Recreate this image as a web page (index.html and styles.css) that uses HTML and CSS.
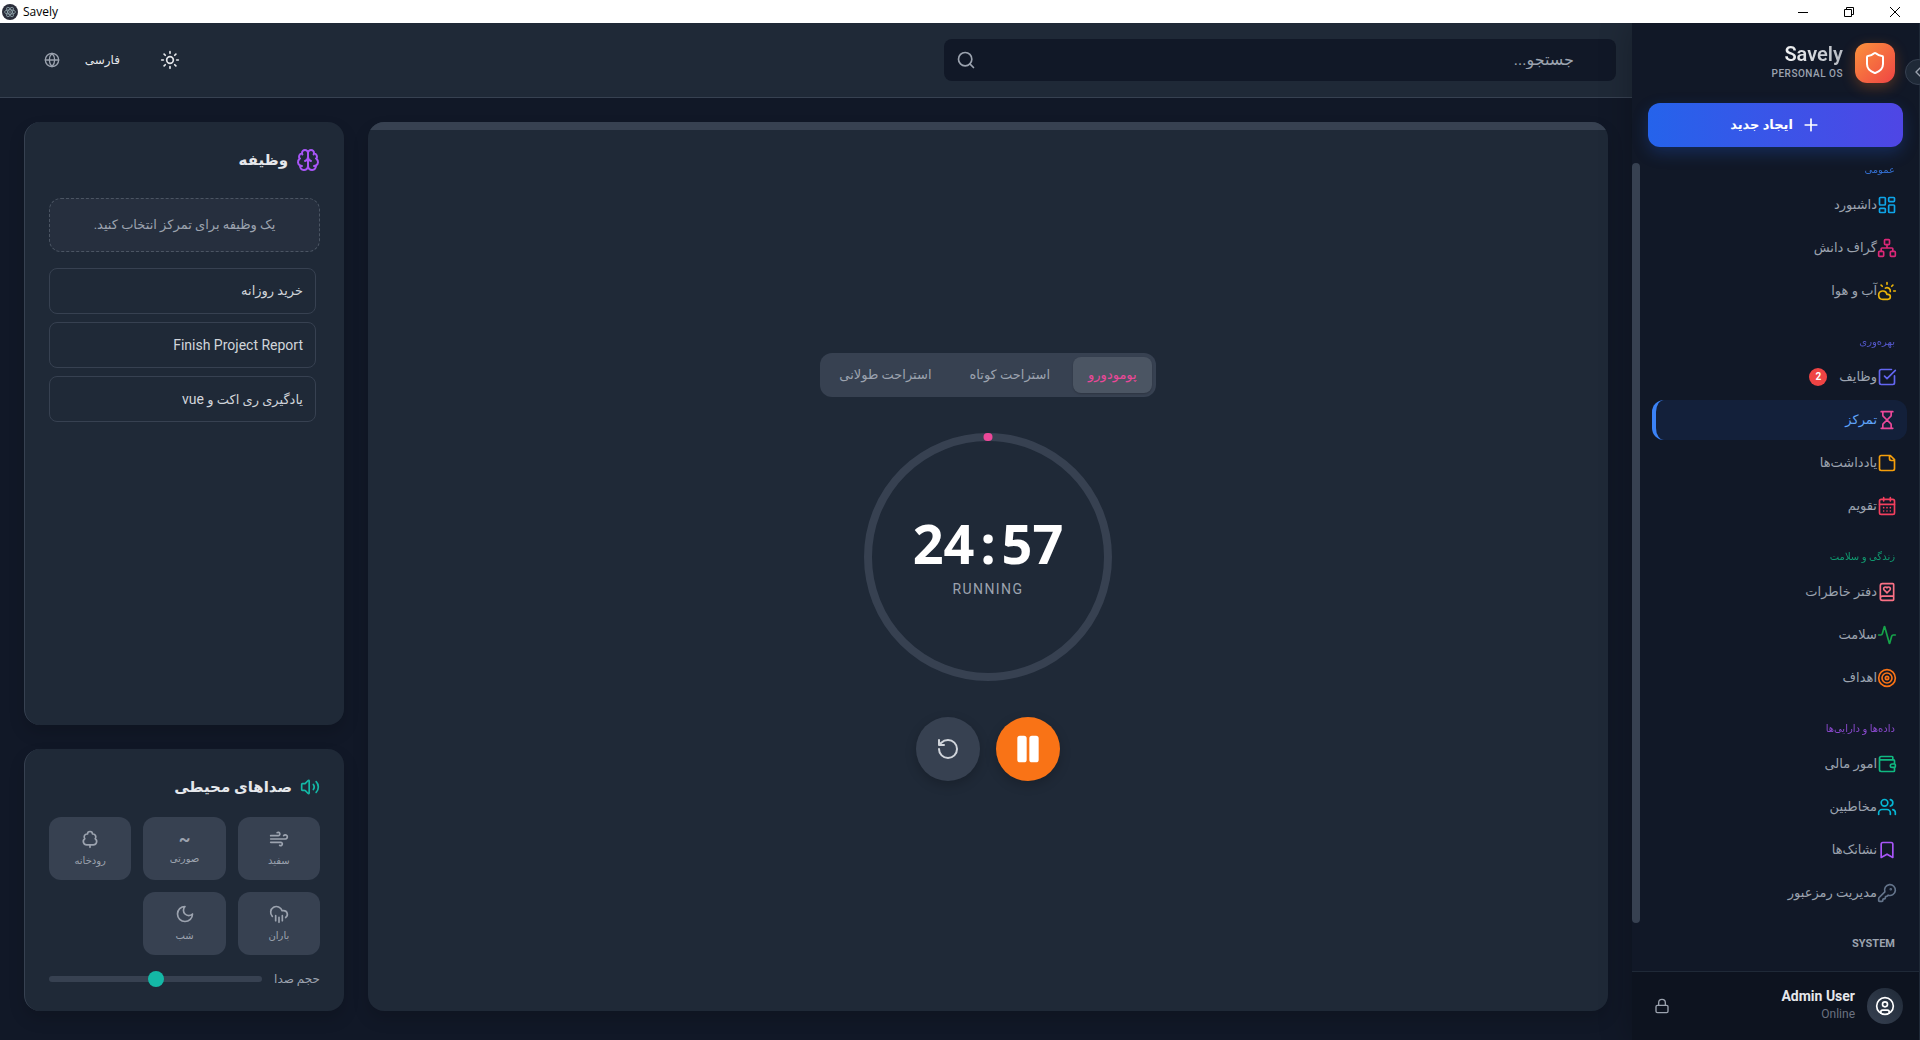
FILE: index.html
```html
<!DOCTYPE html>
<html lang="fa" dir="rtl">
<head>
    <meta charset="UTF-8">
    <meta name="viewport" content="width=device-width, initial-scale=1.0">
    <title>Savely</title>
    <link rel="stylesheet" href="styles.css">
</head>
<body>
    <div class="titlebar" dir="ltr">
        <svg class="app-icon" viewBox="0 0 16 16">
            <circle cx="8" cy="8" r="8" fill="#2b2e3b"/>
            <g fill="none" stroke="#9fb6bc" stroke-width="0.7">
                <ellipse cx="8" cy="8" rx="5.4" ry="2.1"/>
                <ellipse cx="8" cy="8" rx="5.4" ry="2.1" transform="rotate(60 8 8)"/>
                <ellipse cx="8" cy="8" rx="5.4" ry="2.1" transform="rotate(120 8 8)"/>
            </g>
            <circle cx="8" cy="8" r="0.8" fill="#9fb6bc"/>
        </svg>
        <span class="titlebar-name">Savely</span>
        <div class="window-buttons">
            <button type="button" aria-label="Minimize"><svg viewBox="0 0 10 10"><path d="M0 5.5h10"/></svg></button>
            <button type="button" aria-label="Restore"><svg viewBox="0 0 10 10"><path d="M.5 2.5h7v7h-7zM2.5 2.5v-2h7v7h-2"/></svg></button>
            <button type="button" aria-label="Close"><svg viewBox="0 0 10 10"><path d="M0 0l10 10M10 0L0 10"/></svg></button>
        </div>
    </div>

    <div class="app">
        <aside class="sidebar">
            <div class="brand">
                <div class="brand-logo">
                    <svg class="icon icon-lg" viewBox="0 0 24 24"><path d="M20 13c0 5-3.5 7.5-7.66 8.95a1 1 0 0 1-.67-.01C7.5 20.5 4 18 4 13V6a1 1 0 0 1 1-1c2 0 4.5-1.2 6.24-2.72a1.17 1.17 0 0 1 1.52 0C14.51 3.81 17 5 19 5a1 1 0 0 1 1 1z"/></svg>
                </div>
                <div class="brand-text">
                    <h1>Savely</h1>
                    <p>PERSONAL OS</p>
                </div>
            </div>
            <button type="button" class="collapse" aria-label="Toggle sidebar">
                <svg class="icon icon-sm" viewBox="0 0 24 24"><path d="m15 18-6-6 6-6"/></svg>
            </button>

            <button type="button" class="create">
                <svg class="icon" viewBox="0 0 24 24"><path d="M5 12h14M12 5v14"/></svg>
                ایجاد جدید
            </button>

            <div class="nav-wrap">
                <nav class="nav">
                    <section>
                        <h2 class="blue">عمومی</h2>
                        <a href="#"><svg class="icon sky" viewBox="0 0 24 24"><rect width="7" height="9" x="3" y="3" rx="1"/><rect width="7" height="5" x="14" y="3" rx="1"/><rect width="7" height="9" x="14" y="12" rx="1"/><rect width="7" height="5" x="3" y="16" rx="1"/></svg>داشبورد</a>
                        <a href="#"><svg class="icon pink-dark" viewBox="0 0 24 24"><rect x="16" y="16" width="6" height="6" rx="1"/><rect x="2" y="16" width="6" height="6" rx="1"/><rect x="9" y="2" width="6" height="6" rx="1"/><path d="M5 16v-3a1 1 0 0 1 1-1h12a1 1 0 0 1 1 1v3M12 12V8"/></svg>گراف دانش</a>
                        <a href="#"><svg class="icon yellow" viewBox="0 0 24 24"><path d="M12 2v2M4.93 4.93l1.41 1.41M20 12h2M19.07 4.93l-1.41 1.41M15.947 12.65a4 4 0 0 0-5.925-4.128M13 22H7a5 5 0 1 1 4.9-6H13a3 3 0 0 1 0 6Z"/></svg>آب و هوا</a>
                    </section>
                    <section>
                        <h2 class="indigo">بهره‌وری</h2>
                        <a href="#"><svg class="icon indigo" viewBox="0 0 24 24"><path d="M21 10.656V19a2 2 0 0 1-2 2H5a2 2 0 0 1-2-2V5a2 2 0 0 1 2-2h12.344M9 11l3 3L22 4"/></svg>وظایف<span class="badge">2</span></a>
                        <a href="#" class="active"><svg class="icon pink" viewBox="0 0 24 24"><path d="M5 22h14M5 2h14M17 22v-4.172a2 2 0 0 0-.586-1.414L12 12l-4.414 4.414A2 2 0 0 0 7 17.828V22M7 2v4.172a2 2 0 0 0 .586 1.414L12 12l4.414-4.414A2 2 0 0 0 17 6.172V2"/></svg>تمرکز</a>
                        <a href="#"><svg class="icon amber" viewBox="0 0 24 24"><path d="M16 3H5a2 2 0 0 0-2 2v14a2 2 0 0 0 2 2h14a2 2 0 0 0 2-2V8ZM15 3v4a2 2 0 0 0 2 2h4"/></svg>یادداشت‌ها</a>
                        <a href="#"><svg class="icon rose" viewBox="0 0 24 24"><path d="M8 2v4M16 2v4M3 10h18M8 14h.01M12 14h.01M16 14h.01M8 18h.01M12 18h.01M16 18h.01"/><rect width="18" height="18" x="3" y="4" rx="2"/></svg>تقویم</a>
                    </section>
                    <section>
                        <h2 class="green">زندگی و سلامت</h2>
                        <a href="#"><svg class="icon rose-light" viewBox="0 0 24 24"><path d="M16 8.2A2.22 2.22 0 0 0 13.8 6c-.8 0-1.4.3-1.8.9-.4-.6-1-.9-1.8-.9A2.22 2.22 0 0 0 8 8.2c0 .6.3 1.2.7 1.6A226.652 226.652 0 0 0 12 13a404 404 0 0 0 3.3-3.1 2.413 2.413 0 0 0 .7-1.7M4 19.5v-15A2.5 2.5 0 0 1 6.5 2H19a1 1 0 0 1 1 1v18a1 1 0 0 1-1 1H6.5a1 1 0 0 1 0-5H20"/></svg>دفتر خاطرات</a>
                        <a href="#"><svg class="icon lime" viewBox="0 0 24 24"><path d="M22 12h-2.48a2 2 0 0 0-1.93 1.46l-2.35 8.36a.25.25 0 0 1-.48 0L9.24 2.18a.25.25 0 0 0-.48 0l-2.35 8.36A2 2 0 0 1 4.49 12H2"/></svg>سلامت</a>
                        <a href="#"><svg class="icon orange" viewBox="0 0 24 24"><circle cx="12" cy="12" r="10"/><circle cx="12" cy="12" r="6"/><circle cx="12" cy="12" r="2"/></svg>اهداف</a>
                    </section>
                    <section>
                        <h2 class="purple">داده‌ها و دارایی‌ها</h2>
                        <a href="#"><svg class="icon green" viewBox="0 0 24 24"><path d="M19 7V4a1 1 0 0 0-1-1H5a2 2 0 0 0 0 4h15a1 1 0 0 1 1 1v4h-3a2 2 0 0 0 0 4h3a1 1 0 0 0 1-1v-2a1 1 0 0 0-1-1M3 5v14a2 2 0 0 0 2 2h15a1 1 0 0 0 1-1v-4"/></svg>امور مالی</a>
                        <a href="#"><svg class="icon cyan" viewBox="0 0 24 24"><path d="M16 21v-2a4 4 0 0 0-4-4H6a4 4 0 0 0-4 4v2M22 21v-2a4 4 0 0 0-3-3.87M16 3.13a4 4 0 0 1 0 7.75"/><circle cx="9" cy="7" r="4"/></svg>مخاطبین</a>
                        <a href="#"><svg class="icon purple" viewBox="0 0 24 24"><path d="m19 21-7-4-7 4V5a2 2 0 0 1 2-2h10a2 2 0 0 1 2 2v16z"/></svg>نشانک‌ها</a>
                        <a href="#"><svg class="icon slate" viewBox="0 0 24 24"><path d="M2.586 17.414A2 2 0 0 0 2 18.828V21a1 1 0 0 0 1 1h3a1 1 0 0 0 1-1v-1a1 1 0 0 1 1-1h1a1 1 0 0 0 1-1v-1a1 1 0 0 1 1-1h.172a2 2 0 0 0 1.414-.586l.814-.814a6.5 6.5 0 1 0-4-4z"/><circle cx="16.5" cy="7.5" r=".5" fill="currentColor"/></svg>مدیریت رمزعبور</a>
                    </section>
                    <section>
                        <h2 class="system">SYSTEM</h2>
                    </section>
                </nav>
                <div class="scroll"></div>
            </div>

            <div class="profile">
                <div class="avatar">
                    <svg class="icon" viewBox="0 0 24 24"><circle cx="12" cy="12" r="10"/><circle cx="12" cy="10" r="3"/><path d="M7 20.662V19a2 2 0 0 1 2-2h6a2 2 0 0 1 2 2v1.662"/></svg>
                </div>
                <div class="profile-text">
                    <strong>Admin User</strong>
                    <span>Online</span>
                </div>
                <button type="button" class="plain" aria-label="Lock">
                    <svg class="icon icon-sm" viewBox="0 0 24 24"><rect width="18" height="11" x="3" y="11" rx="2"/><path d="M7 11V7a5 5 0 0 1 10 0v4"/></svg>
                </button>
            </div>
        </aside>

        <div class="content">
            <header class="topbar">
                <label class="search">
                    <input type="text" placeholder="جستجو..." aria-label="جستجو">
                    <svg class="icon" viewBox="0 0 24 24"><circle cx="11" cy="11" r="8"/><path d="m21 21-4.34-4.34"/></svg>
                </label>
                <div class="topbar-tools">
                    <button type="button" class="plain theme" aria-label="Theme">
                        <svg class="icon" viewBox="0 0 24 24"><circle cx="12" cy="12" r="4"/><path d="M12 2v2M12 20v2M4.93 4.93l1.41 1.41M17.66 17.66l1.41 1.41M2 12h2M20 12h2M6.34 17.66l-1.41 1.41M19.07 4.93l-1.41 1.41"/></svg>
                    </button>
                    <label class="language">
                        <select aria-label="زبان">
                            <option>فارسی</option>
                        </select>
                        <svg class="icon icon-sm" viewBox="0 0 24 24"><circle cx="12" cy="12" r="10"/><path d="M12 2a14.5 14.5 0 0 0 0 20 14.5 14.5 0 0 0 0-20M2 12h20"/></svg>
                    </label>
                </div>
            </header>

            <main class="main">
                <section class="card focus">
                    <div class="progress"></div>
                    <div class="timer">
                        <div class="tabs">
                            <button type="button" class="selected">پومودورو</button>
                            <button type="button">استراحت کوتاه</button>
                            <button type="button">استراحت طولانی</button>
                        </div>
                        <div class="ring">
                            <svg viewBox="0 0 256 256">
                                <circle cx="128" cy="128" r="120" fill="none" stroke="#374151" stroke-width="8"/>
                                <path d="M127.5 8h1" stroke="#ec4899" stroke-width="8" stroke-linecap="round"/>
                            </svg>
                            <div class="time" dir="ltr">24<span>:</span>57</div>
                            <div class="state">RUNNING</div>
                        </div>
                        <div class="controls">
                            <button type="button" class="pause" aria-label="Pause">
                                <svg viewBox="0 0 24 24"><rect x="14" y="3" width="5" height="18" rx="1"/><rect x="5" y="3" width="5" height="18" rx="1"/></svg>
                            </button>
                            <button type="button" class="reset" aria-label="Reset">
                                <svg class="icon icon-lg" viewBox="0 0 24 24"><path d="M3 12a9 9 0 1 0 9-9 9.75 9.75 0 0 0-6.74 2.74L3 8M3 3v5h5"/></svg>
                            </button>
                        </div>
                    </div>
                </section>

                <div class="side">
                    <section class="card tasks">
                        <h3><svg class="icon icon-lg purple" viewBox="0 0 24 24"><path d="M12 5a3 3 0 1 0-5.997.125 4 4 0 0 0-2.526 5.77 4 4 0 0 0 .556 6.588A4 4 0 1 0 12 18ZM12 5a3 3 0 1 1 5.997.125 4 4 0 0 1 2.526 5.77 4 4 0 0 1-.556 6.588A4 4 0 1 1 12 18ZM15 13a4.5 4.5 0 0 1-3-4 4.5 4.5 0 0 1-3 4M17.599 6.5a3 3 0 0 0 .399-1.375M6.003 5.125A3 3 0 0 0 6.401 6.5M3.477 10.896a4 4 0 0 1 .585-.396M19.938 10.5a4 4 0 0 1 .585.396M6 18a4 4 0 0 1-1.967-.516M19.967 17.484A4 4 0 0 1 18 18"/></svg>وظیفه</h3>
                        <p class="empty">یک وظیفه برای تمرکز انتخاب کنید.</p>
                        <div class="task-list">
                            <button type="button">خرید روزانه</button>
                            <button type="button" lang="en">Finish Project Report</button>
                            <button type="button">یادگیری ری اکت و <span lang="en">vue</span></button>
                        </div>
                    </section>

                    <section class="card sounds">
                        <h3><svg class="icon teal" viewBox="0 0 24 24"><path d="M11 4.702a.705.705 0 0 0-1.203-.498L6.413 7.587A1.4 1.4 0 0 1 5.416 8H3a1 1 0 0 0-1 1v6a1 1 0 0 0 1 1h2.416a1.4 1.4 0 0 1 .997.413l3.383 3.384A.705.705 0 0 0 11 19.298zM16 9a5 5 0 0 1 0 6M19.364 18.364a9 9 0 0 0 0-12.728"/></svg>صداهای محیطی</h3>
                        <div class="sound-grid">
                            <button type="button"><svg class="icon" viewBox="0 0 24 24"><path d="M12.8 19.6A2 2 0 1 0 14 16H2M17.5 8a2.5 2.5 0 1 1 2 4H2M9.8 4.4A2 2 0 1 1 11 8H2"/></svg>سفید</button>
                            <button type="button"><b>~</b>صورتی</button>
                            <button type="button"><svg class="icon" viewBox="0 0 24 24"><path d="M8 19a4 4 0 0 1-2.24-7.32A3.5 3.5 0 0 1 9 6.03V6a3 3 0 1 1 6 0v.04a3.5 3.5 0 0 1 3.24 5.65A4 4 0 0 1 16 19ZM12 19v3"/></svg>رودخانه</button>
                            <button type="button"><svg class="icon" viewBox="0 0 24 24"><path d="M4 14.899A7 7 0 1 1 15.71 8h1.79a4.5 4.5 0 0 1 2.5 8.242M16 14v6M8 14v6M12 16v6"/></svg>باران</button>
                            <button type="button"><svg class="icon" viewBox="0 0 24 24"><path d="M12 3a6 6 0 0 0 9 9 9 9 0 1 1-9-9Z"/></svg>شب</button>
                        </div>
                        <div class="volume">
                            <label for="volume">حجم صدا</label>
                            <input type="range" id="volume" min="0" max="100" value="50">
                        </div>
                    </section>
                </div>
            </main>
        </div>
    </div>
</body>
</html>
```
FILE: styles.css
```css
* {
    box-sizing: border-box;
}

body {
    display: flex;
    flex-direction: column;
    height: 100vh;
    margin: 0;
    overflow: hidden;
    font-family: Roboto, "DejaVu Sans", sans-serif;
    font-size: 13px;
    line-height: 20px;
    color: #e5e7eb;
    background-color: #111827;
}

h1, h2, h3, p {
    margin: 0;
}

button, input, select {
    margin: 0;
    padding: 0;
    border: none;
    font: inherit;
    color: inherit;
    background: none;
}

button {
    cursor: pointer;
}

/* icons */
.icon {
    flex: none;
    width: 20px;
    height: 20px;
    fill: none;
    stroke: currentColor;
    stroke-width: 2;
    stroke-linecap: round;
    stroke-linejoin: round;
}

.icon-sm {
    width: 16px;
    height: 16px;
}

.icon-lg {
    width: 24px;
    height: 24px;
}

.blue { color: #3b82f6; }
.sky { color: #0ea5e9; }
.pink { color: #ec4899; }
.pink-dark { color: #db2777; }
.yellow { color: #eab308; }
.indigo { color: #6366f1; }
.amber { color: #f59e0b; }
.rose { color: #f43f5e; }
.rose-light { color: #fb7185; }
.green { color: #10b981; }
.lime { color: #16a34a; }
.orange { color: #f97316; }
.purple { color: #a855f7; }
.cyan { color: #06b6d4; }
.slate { color: #64748b; }
.teal { color: #14b8a6; }

/* window title bar */
.titlebar {
    flex: none;
    display: flex;
    align-items: center;
    height: 23px;
    padding: 0 2px;
    font-family: "Open Sans", sans-serif;
    font-size: 12px;
    color: #000;
    background-color: #fff;
}

.app-icon {
    width: 16px;
    height: 16px;
    margin-right: 5px;
}

.window-buttons {
    display: flex;
    margin-left: auto;
}

.window-buttons button {
    display: flex;
    justify-content: center;
    align-items: center;
    width: 46px;
    height: 20px;
}

.window-buttons svg {
    width: 10px;
    height: 10px;
    fill: none;
    stroke: #000;
    overflow: visible;
}

.app {
    flex: 1;
    display: flex;
    min-height: 0;
    overflow: hidden;
}

/* sidebar */
.sidebar {
    position: relative;
    z-index: 1;
    flex: none;
    display: flex;
    flex-direction: column;
    width: 288px;
    border-right: 1px solid #1f2937;
    background-color: #111827;
    box-shadow: 0 0 30px rgba(0, 0, 0, 0.25);
}

.brand {
    display: flex;
    align-items: center;
    gap: 12px;
    padding: 20px 24px;
}

.brand-logo {
    display: flex;
    justify-content: center;
    align-items: center;
    width: 40px;
    height: 40px;
    border-radius: 12px;
    color: #fff;
    background-image: linear-gradient(to bottom right, #fb923c, #ef4444);
    box-shadow: 0 4px 14px rgba(249, 115, 22, 0.3);
}

.brand-text {
    direction: ltr;
    text-align: right;
}

.brand h1 {
    font-size: 20px;
    line-height: 22px;
    font-weight: 600;
    color: transparent;
    background-image: linear-gradient(to right, #fff, #b6bac2);
    background-clip: text;
}

.brand p {
    font-size: 10px;
    line-height: 18px;
    font-weight: 500;
    letter-spacing: 0.5px;
    color: #9ca3af;
}

.collapse {
    position: absolute;
    top: 36px;
    right: -12px;
    display: flex;
    justify-content: center;
    align-items: center;
    width: 26px;
    height: 26px;
    border: 1px solid #374151;
    border-radius: 50%;
    color: #9ca3af;
    background-color: #1f2937;
}

.create {
    flex: none;
    display: flex;
    justify-content: center;
    align-items: center;
    gap: 8px;
    height: 44px;
    margin: 0 16px 16px;
    border-radius: 12px;
    font-weight: bold;
    color: #fff;
    background-image: linear-gradient(to right, #2563eb, #4f46e5);
    box-shadow: 0 6px 16px rgba(37, 99, 235, 0.25);
}

.nav-wrap {
    flex: 1;
    display: flex;
    min-height: 0;
    overflow: hidden;
}

.nav {
    flex: 1;
    padding: 0 12px;
}

.nav section {
    display: flex;
    flex-direction: column;
    gap: 3px;
    margin-bottom: 24px;
}

.nav h2 {
    margin-bottom: 5px;
    padding: 0 12px;
    font-size: 10px;
    line-height: 14px;
    font-weight: normal;
    opacity: 0.8;
}

.nav .system {
    font-size: 11px;
    font-weight: bold;
    color: #9ca3af;
    opacity: 1;
}

.nav a {
    display: flex;
    align-items: center;
    height: 40px;
    padding: 0 10px;
    border-left: 4px solid transparent;
    border-radius: 12px;
    color: #9ca3af;
    text-decoration: none;
}

.nav a.active {
    border-left-color: #3b82f6;
    color: #60a5fa;
    background-color: #13203a;
}

.badge {
    width: 18px;
    margin-right: 12px;
    border-radius: 9px;
    font-size: 10px;
    line-height: 18px;
    font-weight: bold;
    text-align: center;
    color: #fff;
    background-color: #ef4444;
}

.scroll {
    width: 8px;
    height: 94%;
    border-radius: 4px;
    background-color: #374151;
}

.profile {
    flex: none;
    display: flex;
    align-items: center;
    gap: 12px;
    padding: 16px 16px 16px 22px;
    border-top: 1px solid #1f2937;
    background-color: #0d131f;
}

.avatar {
    display: flex;
    justify-content: center;
    align-items: center;
    width: 36px;
    height: 36px;
    border-radius: 50%;
    color: #fff;
    background-image: linear-gradient(to top right, #374151, #1f2937);
}

.profile-text {
    flex: 1;
    display: flex;
    flex-direction: column;
    font-size: 14px;
}

.profile-text strong {
    line-height: 16px;
}

.profile-text span {
    font-size: 12px;
    line-height: 20px;
    color: #6b7280;
}

.plain {
    display: flex;
    color: #9ca3af;
}

/* top bar */
.content {
    flex: 1;
    display: flex;
    flex-direction: column;
    min-width: 0;
}

.topbar {
    display: flex;
    justify-content: space-between;
    align-items: center;
    padding: 16px;
    border-bottom: 1px solid #374151;
    background-color: #1f2937;
}

.search {
    display: flex;
    align-items: center;
    width: 42%;
    height: 42px;
    padding: 0 42px 0 12px;
    border-radius: 8px;
    font-size: 16px;
    color: #9ca3af;
    background-color: #111827;
}

.search input {
    flex: 1;
    outline: none;
}

.search input::placeholder {
    color: #9ca3af;
}

.topbar-tools {
    display: flex;
    align-items: center;
    gap: 40px;
    padding-left: 28px;
}

.theme {
    color: #e5e7eb;
}

.language {
    display: flex;
    align-items: center;
    gap: 24px;
    color: #9ca3af;
}

.language select {
    appearance: none;
    font-size: 12px;
    color: #e5e7eb;
}

/* page */
.main {
    flex: 1;
    display: flex;
    gap: 24px;
    min-height: 0;
    padding: 24px 24px 29px;
}

.card {
    border-radius: 16px;
    background-color: #1f2937;
    box-shadow: 0 8px 16px rgba(0, 0, 0, 0.15);
}

.focus {
    flex: 1;
    display: flex;
    flex-direction: column;
    overflow: hidden;
}

.progress {
    height: 8px;
    margin-bottom: -8px;
    background-color: #374151;
}

.timer {
    flex: 1;
    display: flex;
    flex-direction: column;
    justify-content: center;
    align-items: center;
    gap: 32px;
}

.tabs {
    display: flex;
    gap: 8px;
    padding: 4px;
    border-radius: 12px;
    background-color: #374151;
}

.tabs button {
    height: 36px;
    padding: 0 15px;
    border-radius: 8px;
    color: #9ca3af;
}

.tabs .selected {
    color: #ec4899;
    background-color: #4b5563;
    box-shadow: 0 1px 2px rgba(0, 0, 0, 0.2);
}

/* the timer text shares the grid with the circle */
.ring {
    display: grid;
    grid-template-rows: 82px 64px 110px;
    justify-items: center;
    width: 256px;
    height: 256px;
}

.ring svg {
    grid-area: 1 / 1 / 4 / 2;
    width: 256px;
    height: 256px;
}

.time {
    grid-area: 2 / 1;
    font-family: "Noto Sans", sans-serif;
    font-size: 54px;
    line-height: 64px;
    font-weight: bold;
    color: #fff;
}

.time span {
    margin: 0 6px;
}

.state {
    grid-area: 3 / 1;
    margin-top: 4px;
    font-size: 14px;
    letter-spacing: 0.1em;
    color: #9ca3af;
}

.controls {
    display: flex;
    gap: 16px;
}

.controls button {
    display: flex;
    justify-content: center;
    align-items: center;
    width: 64px;
    height: 64px;
    border-radius: 50%;
    box-shadow: 0 4px 12px rgba(0, 0, 0, 0.2);
}

.pause {
    background-color: #f97316;
}

.pause svg {
    width: 32px;
    height: 32px;
    fill: #fff;
    stroke: #fff;
    stroke-width: 2;
}

.reset {
    color: #d1d5db;
    background-color: #374151;
}

/* side column */
.side {
    flex: none;
    display: flex;
    flex-direction: column;
    gap: 24px;
    width: 320px;
}

.side .card {
    padding: 24px;
    border-left: 1px solid #374151;
}

.side h3 {
    display: flex;
    align-items: center;
    gap: 8px;
    font-size: 15px;
    line-height: 28px;
}

.tasks {
    flex: 1;
}

.empty {
    margin: 24px 0 16px;
    padding: 16px;
    border: 1px dashed #4b5563;
    border-radius: 12px;
    text-align: center;
    color: #9ca3af;
    background-color: #262f3e;
}

.task-list {
    display: flex;
    flex-direction: column;
    gap: 8px;
    padding-right: 4px;
}

.task-list button {
    height: 46px;
    padding: 0 12px;
    border: 1px solid #374151;
    border-radius: 8px;
    text-align: right;
    color: #d1d5db;
}

.task-list :lang(en) {
    font-size: 14px;
}

.sound-grid {
    display: grid;
    grid-template-columns: repeat(3, 1fr);
    gap: 12px;
    margin: 16px 0;
}

.sound-grid button {
    display: flex;
    flex-direction: column;
    justify-content: center;
    align-items: center;
    gap: 4px;
    height: 63px;
    border-radius: 12px;
    font-size: 10px;
    line-height: 16px;
    color: #9ca3af;
    background-color: #374151;
}

.sound-grid b {
    font-size: 18px;
}

.volume {
    display: flex;
    align-items: center;
    gap: 12px;
    color: #9ca3af;
}

.volume label {
    font-size: 12px;
    line-height: 16px;
}

.volume input {
    flex: 1;
    min-width: 0;
    height: 6px;
    appearance: none;
    border-radius: 3px;
    background-color: #374151;
}

.volume input::-webkit-slider-thumb {
    appearance: none;
    width: 16px;
    height: 16px;
    border-radius: 50%;
    background-color: #14b8a6;
}
```
